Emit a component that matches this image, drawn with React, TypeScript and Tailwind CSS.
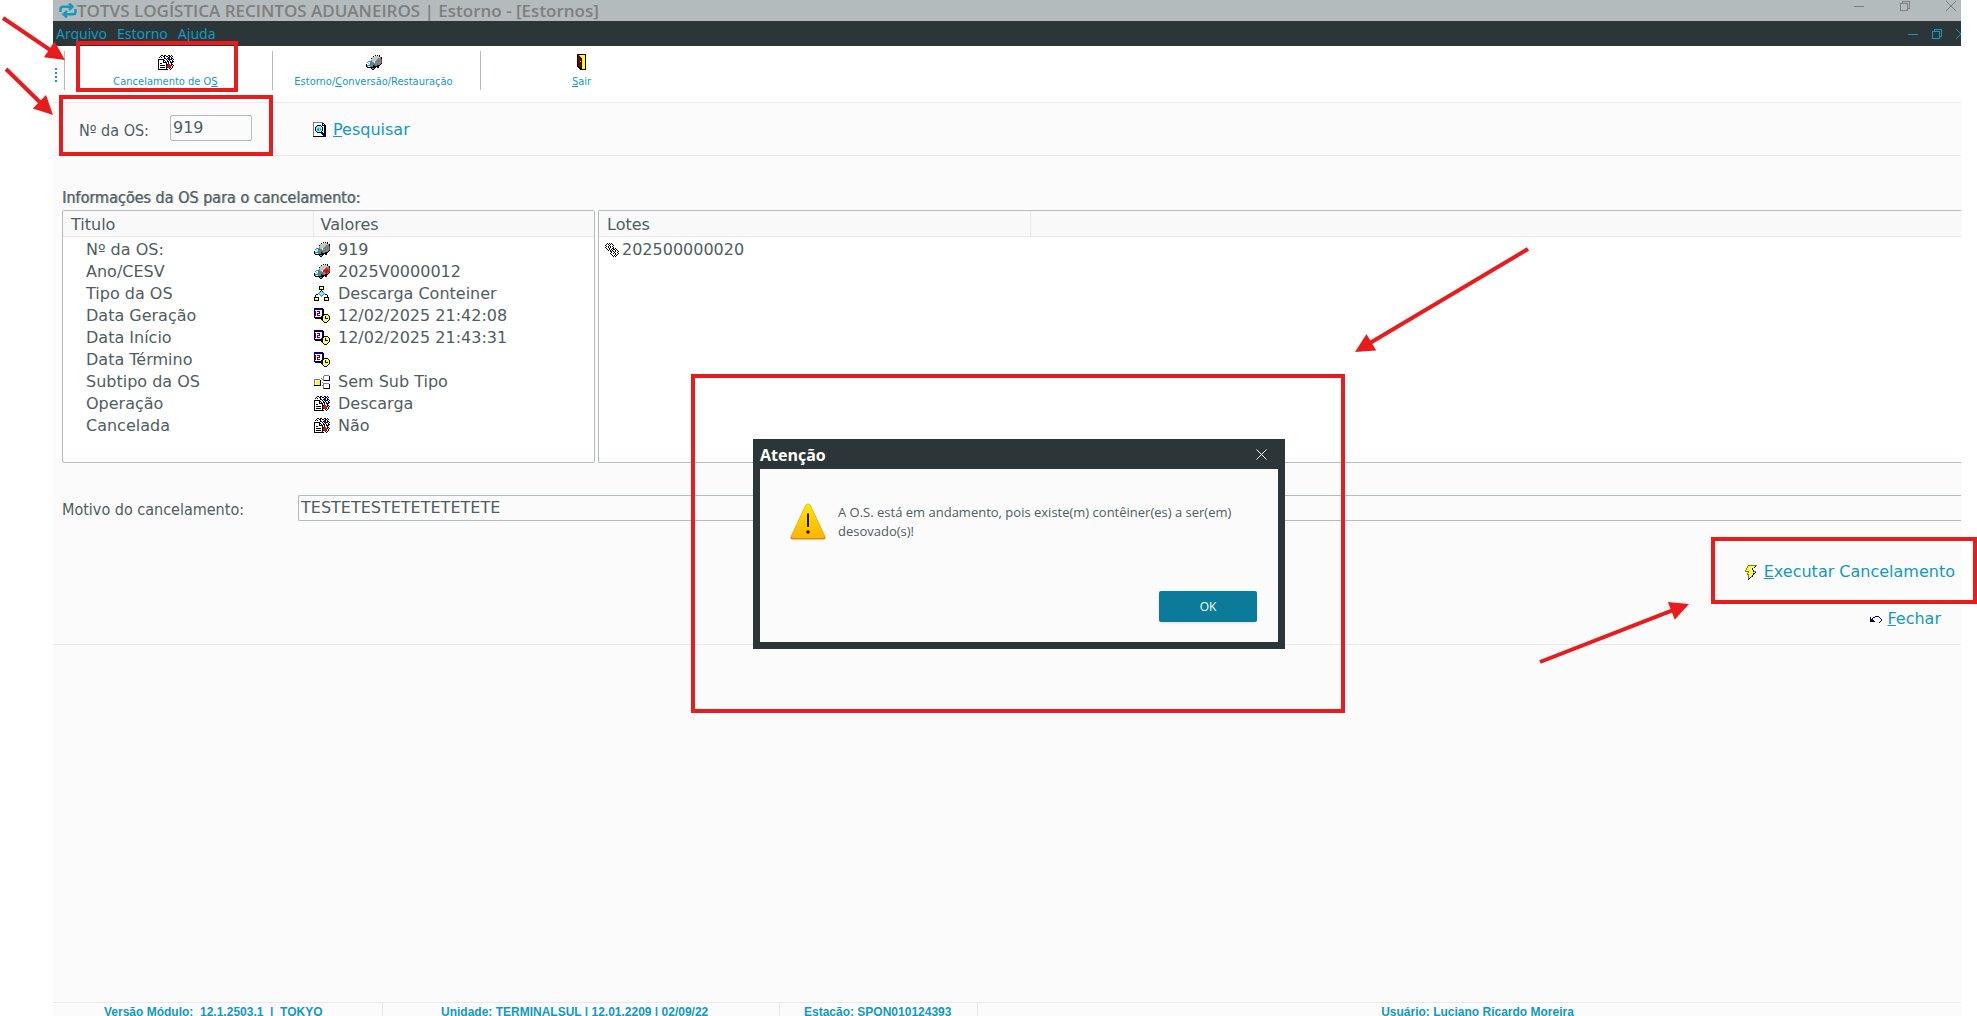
import React from 'react';

const PALETTE: Record<string, string> = {
  k: '#000000',
  w: '#ffffff',
  g: '#808080',
  l: '#c3c8c0',
  d: '#505458',
  r: '#ff0000',
  b: '#0000ff',
  n: '#00007f',
  y: '#ffff00',
  p: '#ffff99',
  c: '#00ffff',
  t: '#3f86a8',
  m: '#7f0000',
  o: '#7f7f00',
};

const ICONS = {
  order: [
    '...kk.kk..kk.k..',
    '..k..kk.kk.kkwk.',
    '.k.k..kw.wkbwk..',
    '......kkwbbbwkk.',
    'kkkkkk..kwbbbkwk',
    'kwwwwkk..kwbwwk.',
    'kwwwwkwk.kkwkwkk',
    'kwwwwkkkk.kwkkk.',
    'kwkkwwwwk.kwwk..',
    'kwwwwwwwkkrrwkk.',
    'kwkkkkkwkrrrrkwk',
    'kwwwwwwwkrrrrwk.',
    'kwkkkkkwkkrrkwk.',
    'kwwwwwwwkwwk.k..',
    'kkkkkkkkkk..k...',
  ],
  truck: [
    '.........k.k.k..',
    '.......k.llllk..',
    '......llllllllgk',
    '.....kllllllgggk',
    '.....llllllggggd',
    '....wtllllgggggd',
    '..gtttllwggggggd',
    '.gwwttgtwggggggd',
    '.wcwttttgggggggk',
    'kwwctttgdgggggk.',
    'ktttttgkdggkkk..',
    'kgwwgggkkkkkk...',
    '.kkkkkkkkk.kk...',
    '.....kggk.......',
    '......kk........',
  ],
  truckRed: [
    '.........k.k.k..',
    '.......k.llllk..',
    '......llllllllgk',
    '.....kllllllgggk',
    '.....llllllgrggd',
    '....wtllllgrrrgd',
    '..gtttllwrrrrrrd',
    '.gwwttgtwrrrrrrd',
    '.wcwttttgggrrrgk',
    'kwwctttgdgggrgk.',
    'ktttttgkdggkkk..',
    'kgwwgggkkkkkk...',
    '.kkkkkkkkk.kk...',
    '.....kggk.......',
    '......kk........',
  ],
  tree: [
    '.....kkkkk......',
    '.....kpppk......',
    '.....kyypk......',
    '.....kkkkk......',
    '.......k........',
    '......kck.......',
    '.....gcwcg......',
    '....gcwcwcg.....',
    '..kk.gcwcg.kk...',
    '.k....gcg....k..',
    '.k.....g.....k..',
    'kkkkk.....kkkkk.',
    'kpppk.....kpppk.',
    'kyypk.....kyypk.',
    'kkkkk.....kkkkk.',
  ],
  calendar: [
    'nnnnnnnnn.......',
    'nnnnnnnnnk......',
    'nwwwwwwwnk......',
    'nmwmmmwwnk......',
    'nmwwwmwwnk......',
    'nmwmmmwwnk......',
    'nmwmwwwwnkkkkk..',
    'nmwmmmwwnkyyypk.',
    'nwwwwwwnkypkypyk',
    'nnnnnnnnkyykyyyk',
    '.kkkkkkkkpykkkpk',
    '.......kkpypypyk',
    '........kypyypk.',
    '.........kyyyk..',
    '..........kkk...',
  ],
  subtype: [
    '..........ggggg.',
    '.........gwwwwwk',
    '.........gwwwwwk',
    '.......g.gwwwwwk',
    'gggggg..ggwwwwwk',
    'gwwwwwk..gkkkkkk',
    'gwyyyyk.........',
    'gwyyyyk.g.......',
    'gwyyyyk..gggggg.',
    'gwyyyyk..gwwwwwk',
    'kkkkkkk.ggwwwwwk',
    '.........gwwwwwk',
    '.........gwwwwwk',
    '.........gkkkkkk',
  ],
  gears: [
    '..k.k.k.......',
    '.kwkwkwk......',
    'kwwwkwwwk.....',
    '.kwkwkwk......',
    'kwwkwkwwk.....',
    '.kwwkwwkk.k...',
    '..kwkwkwkkwk..',
    '...k.k.kwwkwk.',
    '.....kkwkwkwwk',
    '......kwwkwwk.',
    '.....kwwkwkwwk',
    '......kwwwkwk.',
    '.......kwkwk..',
    '........k.k...',
  ],
  search: [
    'gggggggggg...',
    'gwwwwwwwwkk..',
    'gwwwwwwwwkwk.',
    'gwwwkkkkwkkkk',
    'gwwkcwcwkwwkk',
    'gwkcwcwcwkwkk',
    'gwkwctccwkwkk',
    'gwkcttwtckwkk',
    'gwkwctccwkwkk',
    'gwwkcwcwkwwkk',
    'gwwwkkkknnwkk',
    'gwwwwwwwnnnkk',
    'gwwwwwwwwnnnk',
    'gwwwwwwwwwnnn',
    'kkkkkkkkkkknn',
  ],
  door: [
    'kkkkkkkkk',
    'kmcyyyyyk',
    'kmmcyyyyk',
    'kmmmyyyyk',
    'kmmmkyyyk',
    'kmmmkyyyk',
    'kmmmkyyyk',
    'kmmykyyyk',
    'kmmmkyyyk',
    'kmmmkyyyk',
    'kmmmkyyyk',
    'kmmmkyyyk',
    'kkmmkyyyk',
    '.kkmkyyyk',
    '..kkkyyyk',
    '...kkkkkk',
  ],
  bolt: [
    '...ooooooooo',
    '..opypypypk.',
    '..oypypypk..',
    '.opypypk....',
    '.oypypyk....',
    'opypypypk...',
    'ooooypypkoo.',
    '...oypypypk.',
    '..opypypkk..',
    '..ooypypk...',
    '...opypk....',
    '...oypok....',
    '...opk......',
    '...ok.......',
    '...k........',
  ],
  undo: [
    '.....nnnn...',
    'n..nn....n..',
    'n.n.......n.',
    'nnn........n',
    'nnnn.......n',
    'nnnnn.....n.',
    '.........n..',
  ],
};

type IconName = keyof typeof ICONS;

const PixelIcon = ({ name }: { name: IconName }) => {
  const rows = ICONS[name];
  const width = rows[0].length;
  return (
    <svg width={width} height={rows.length} viewBox={`0 0 ${width} ${rows.length}`} shapeRendering="crispEdges" className="shrink-0" aria-hidden="true">
      {rows.map((row, y) =>
        row.split('').map((c, x) => (c === '.' ? null : <rect key={`${x}-${y}`} x={x} y={y} width="1" height="1" fill={PALETTE[c]} />))
      )}
    </svg>
  );
};

const details: { title: string; icon: IconName; value: string }[] = [
  { title: 'Nº da OS:', icon: 'truck', value: '919' },
  { title: 'Ano/CESV', icon: 'truckRed', value: '2025V0000012' },
  { title: 'Tipo da OS', icon: 'tree', value: 'Descarga Conteiner' },
  { title: 'Data Geração', icon: 'calendar', value: '12/02/2025 21:42:08' },
  { title: 'Data Início', icon: 'calendar', value: '12/02/2025 21:43:31' },
  { title: 'Data Término', icon: 'calendar', value: '' },
  { title: 'Subtipo da OS', icon: 'subtype', value: 'Sem Sub Tipo' },
  { title: 'Operação', icon: 'order', value: 'Descarga' },
  { title: 'Cancelada', icon: 'order', value: 'Não' },
];

const WindowControls = () => (
  <>
    <button type="button" aria-label="Minimizar" className="flex h-3 w-3 items-center justify-center">
      <svg width="10" height="10" viewBox="0 0 10 10" fill="none" stroke="currentColor" shapeRendering="crispEdges"><path d="M0 5.5h10" /></svg>
    </button>
    <button type="button" aria-label="Restaurar" className="flex h-3 w-3 items-center justify-center">
      <svg width="10" height="10" viewBox="0 0 10 10" fill="none" stroke="currentColor" shapeRendering="crispEdges"><path d="M.5 2.5h7v7h-7zM2.5 2V.5h7v7H8" /></svg>
    </button>
    <button type="button" aria-label="Fechar janela" className="flex h-3 w-3 items-center justify-center">
      <svg width="10" height="10" viewBox="0 0 10 10" fill="none" stroke="currentColor"><path d="M0 0l10 10M10 0L0 10" /></svg>
    </button>
  </>
);

const TitleBar = () => (
  <header className="flex h-[21px] items-center justify-between bg-[#b4bbbc] pr-1 pl-[6px] text-[#7d7f80]">
    <div className="flex items-center">
      <svg width="18" height="15" viewBox="0 0 18 15" fill="none" stroke="#1299bf" strokeWidth="2.4" aria-hidden="true">
        <path d="M1.5 9V6Q1.5 3.7 4 3.7H12" />
        <path d="M10 .5L13.5 3.7L10 7" />
        <path d="M16.5 6V9Q16.5 11.3 14 11.3H6" />
        <path d="M8 8L4.5 11.3L8 14.5" />
      </svg>
      <h1 className="font-['Open_Sans'] text-[17px] leading-5 font-semibold whitespace-nowrap">TOTVS LOGÍSTICA RECINTOS ADUANEIROS | Estorno - [Estornos]</h1>
    </div>
    <div className="flex h-3 gap-[34px] self-start">
      <WindowControls />
    </div>
  </header>
);

const MenuBar = () => (
  <nav className="flex h-[25px] items-center justify-between bg-[#2c3638] pl-[3px] text-[#1299bf]">
    <div className="flex gap-[10px] font-['Noto_Sans'] text-sm leading-6">
      <button type="button">Arquivo</button>
      <button type="button">Estorno</button>
      <button type="button">Ajuda</button>
    </div>
    <div className="-mr-[6px] flex gap-3">
      <WindowControls />
    </div>
  </nav>
);

interface ToolButtonProps {
  icon: IconName;
  children: React.ReactNode;
}

const ToolButton = ({ icon, children }: ToolButtonProps) => (
  <button type="button" className="flex h-[39px] w-52 flex-col items-center gap-1 border-l border-[#b4bbbc] pt-[3px] pr-[6px] text-[#1299bf]">
    <span className="flex h-4 items-center">
      <PixelIcon name={icon} />
    </span>
    <span className="font-['DejaVu_Sans_Condensed'] text-[11px] leading-4 whitespace-nowrap">{children}</span>
  </button>
);

const Toolbar = () => (
  <div className="flex h-[57px] items-center border-b border-[#e9e9e9] bg-white pb-[7px]">
    <div className="mt-2 mr-[7px] ml-[2px] h-[14px] border-l-2 border-dotted border-[#1299bf]" />
    <ToolButton icon="order">Cancelamento de O<u>S</u></ToolButton>
    <ToolButton icon="truck">Estorno/<u>C</u>onversão/Restauração</ToolButton>
    <ToolButton icon="door"><u>S</u>air</ToolButton>
  </div>
);

const SearchRow = () => (
  <form className="flex h-[53px] items-center border-b border-[#e9e9e9] pt-px pl-[26px]" onSubmit={(e) => e.preventDefault()}>
    <label htmlFor="os" className="w-[91px] pt-[2px] font-['DejaVu_Sans_Condensed'] text-base leading-5">Nº da OS:</label>
    <input
      id="os"
      defaultValue="919"
      className="mb-1 h-[26px] w-[82px] rounded-xs border border-[#b4bbbc] bg-[#fbfbfb] px-[2px] text-base leading-5 outline-none"
    />
    <button type="submit" className="ml-[61px] flex items-center gap-[7px] text-base leading-5 text-[#1299bf]">
      <PixelIcon name="search" />
      <span><u>P</u>esquisar</span>
    </button>
  </form>
);

const headCell = 'h-[25px] border-b border-[#e9e9e9] bg-[#f9f9f9] p-0 pt-[3px] text-left font-normal';

const OrderDetails = () => (
  <section className="pl-[9px]">
    <h2 className="pt-8 pb-[2px] font-['DejaVu_Sans_Condensed'] text-base leading-5 [text-shadow:1px_0_#a8b0b2]">Informações da OS para o cancelamento:</h2>
    <div className="flex gap-[3px]">
      <div className="h-[253px] w-[533px] shrink-0 rounded-xs border border-[#b4bbbc] bg-white">
        <table className="w-full table-fixed border-collapse">
          <thead>
            <tr>
              <th className={`${headCell} w-[250px] border-r pl-2`}>Titulo</th>
              <th className={`${headCell} pl-[7px]`}>Valores</th>
            </tr>
          </thead>
          <tbody className="leading-[18px]">
            {details.map((row) => (
              <tr key={row.title}>
                <td className="h-[22px] p-0 pt-1 pl-[23px]">{row.title}</td>
                <td className="h-[22px] p-0 pt-1">
                  <div className="flex items-center gap-2 pl-px">
                    <PixelIcon name={row.icon} />
                    {row.value}
                  </div>
                </td>
              </tr>
            ))}
          </tbody>
        </table>
      </div>
      <div className="h-[253px] grow rounded-l-xs border border-r-0 border-[#b4bbbc] bg-white">
        <table className="w-full table-fixed border-collapse">
          <thead>
            <tr>
              <th className={`${headCell} w-[431px] border-r pl-2`}>Lotes</th>
              <td className={headCell} />
            </tr>
          </thead>
          <tbody className="leading-[18px]">
            <tr>
              <td className="h-[22px] p-0 pt-1 pl-[6px]">
                <div className="flex items-center gap-[3px]">
                  <PixelIcon name="gears" />
                  202500000020
                </div>
              </td>
            </tr>
          </tbody>
        </table>
      </div>
    </div>
  </section>
);

const CancelForm = () => (
  <section className="border-b border-[#e9e9e9] pt-8 pb-[15px] pl-[9px]">
    <div className="flex items-center">
      <label htmlFor="reason" className="w-[236px] shrink-0 pt-[3px] font-['DejaVu_Sans_Condensed'] text-base leading-5">Motivo do cancelamento:</label>
      <input
        id="reason"
        defaultValue="TESTETESTETETETETETE"
        className="h-[26px] grow rounded-l-xs border border-r-0 border-[#b4bbbc] bg-[#fbfbfb] px-[2px] pb-px text-base leading-5 outline-none"
      />
    </div>
    <div className="flex flex-col items-end gap-[27px] pt-[41px] text-base leading-5 text-[#1299bf]">
      <button type="button" className="mr-[6px] flex items-center gap-[7px]">
        <PixelIcon name="bolt" />
        <span><u>E</u>xecutar Cancelamento</span>
      </button>
      <button type="button" className="mr-5 flex items-center gap-[6px]">
        <PixelIcon name="undo" />
        <span><u>F</u>echar</span>
      </button>
    </div>
  </section>
);

const StatusBar = () => (
  <footer className="flex h-[14px] shrink-0 border-t border-[#e9e9e9] pl-[51px] font-['Liberation_Sans'] text-xs leading-[18px] font-bold whitespace-pre text-[#1299bf]">
    <span className="w-[279px] border-r border-[#e9e9e9]">Versão Módulo:  12.1.2503.1  |  TOKYO</span>
    <span className="w-[397px] border-r border-[#e9e9e9] pl-[58px]">Unidade: TERMINALSUL | 12.01.2209 | 02/09/22</span>
    <span className="w-[198px] border-r border-[#e9e9e9] pl-6">Estação: SPON010124393</span>
    <span className="grow pl-4 text-center">Usuário: Luciano Ricardo Moreira</span>
  </footer>
);

const AlertDialog = () => (
  <div role="alertdialog" aria-labelledby="alert-title" aria-describedby="alert-text" className="absolute top-[439px] left-[753px] w-[532px] bg-[#2c3638] px-[7px] pb-[7px]">
    <div className="flex h-[30px] items-center justify-between pr-[11px] text-white">
      <h2 id="alert-title" className="pt-px font-['Open_Sans'] text-base leading-6 font-bold">Atenção</h2>
      <button type="button" aria-label="Fechar aviso">
        <svg width="11" height="11" viewBox="0 0 11 11" stroke="currentColor"><path d="M.5 .5l10 10M10.5 .5l-10 10" /></svg>
      </button>
    </div>
    <div className="flex flex-col bg-[#fbfbfb] pt-[34px] pr-[21px] pb-5 pl-[30px]">
      <div className="flex gap-3">
        <svg width="36" height="37" viewBox="0 0 36 37" className="shrink-0" aria-hidden="true">
          <defs>
            <linearGradient id="warn" x1="0" y1="0" x2="0" y2="1">
              <stop offset="0" stopColor="#ffe600" />
              <stop offset="1" stopColor="#ffb400" />
            </linearGradient>
          </defs>
          <path d="M15.5 2Q18-1 20.5 2L35.5 34Q36 36.5 33 36.5H3Q0 36.5 .5 34Z" fill="#dc8c10" />
          <path d="M16 2Q18 0 20 2L34.5 33Q35 35 32.5 35H3.500Q1 35 1.500 33Z" fill="url(#warn)" />
          <path d="M18 10.5V24" stroke="#1a1400" strokeWidth="2" />
          <circle cx="18" cy="29" r="1.7" fill="#1a1400" />
        </svg>
        <p id="alert-text" className="w-[410px] font-['Open_Sans'] text-[13px] leading-[19px]">
          A O.S. está em andamento, pois existe(m) contêiner(es) a ser(em) desovado(s)!
        </p>
      </div>
      <button type="button" className="mt-[50px] h-[31px] w-[98px] self-end rounded-xs bg-[#0c7a99] font-['Open_Sans'] text-xs text-white shadow">OK</button>
    </div>
  </div>
);

const boxes = [
  'top-[41px] left-[76px] h-[51px] w-[162px]',
  'top-[95px] left-[59px] h-[61px] w-[214px]',
  'top-[374px] left-[691px] h-[339px] w-[654px]',
  'top-[537px] left-[1711px] h-[67px] w-[266px]',
];

const arrows = [
  [3, 18, 65, 60],
  [6, 69, 53, 115],
  [1528, 249, 1355, 352],
  [1540, 662, 1689, 604],
];

const Annotations = () => (
  <div className="pointer-events-none absolute inset-0 overflow-hidden">
    {boxes.map((box) => (
      <div key={box} className={`absolute border-4 border-[#e81c1c] ${box}`} />
    ))}
    <svg className="absolute inset-0 h-full w-full" aria-hidden="true">
      {arrows.map(([x1, y1, x2, y2]) => {
        const len = Math.hypot(x2 - x1, y2 - y1);
        const angle = (Math.atan2(y2 - y1, x2 - x1) * 180) / Math.PI;
        return (
          <g key={x1} transform={`translate(${x1} ${y1}) rotate(${angle})`} fill="#e81c1c">
            <rect x="0" y="-2" width={len - 15} height="4" />
            <path d={`M${len} 0l-19 -9.5v19z`} />
          </g>
        );
      })}
    </svg>
  </div>
);

const App: React.FC = () => (
  <div className="relative flex h-screen min-h-[700px] overflow-hidden bg-white pr-4 pl-[53px] font-['DejaVu_Sans',sans-serif] text-base leading-5 text-[#4f5d61]">
    <div className="flex min-w-0 grow flex-col overflow-hidden bg-[#fbfbfb]">
      <TitleBar />
      <MenuBar />
      <Toolbar />
      <main className="grow">
        <SearchRow />
        <OrderDetails />
        <CancelForm />
      </main>
      <StatusBar />
    </div>
    <AlertDialog />
    <Annotations />
  </div>
);

export default App;
